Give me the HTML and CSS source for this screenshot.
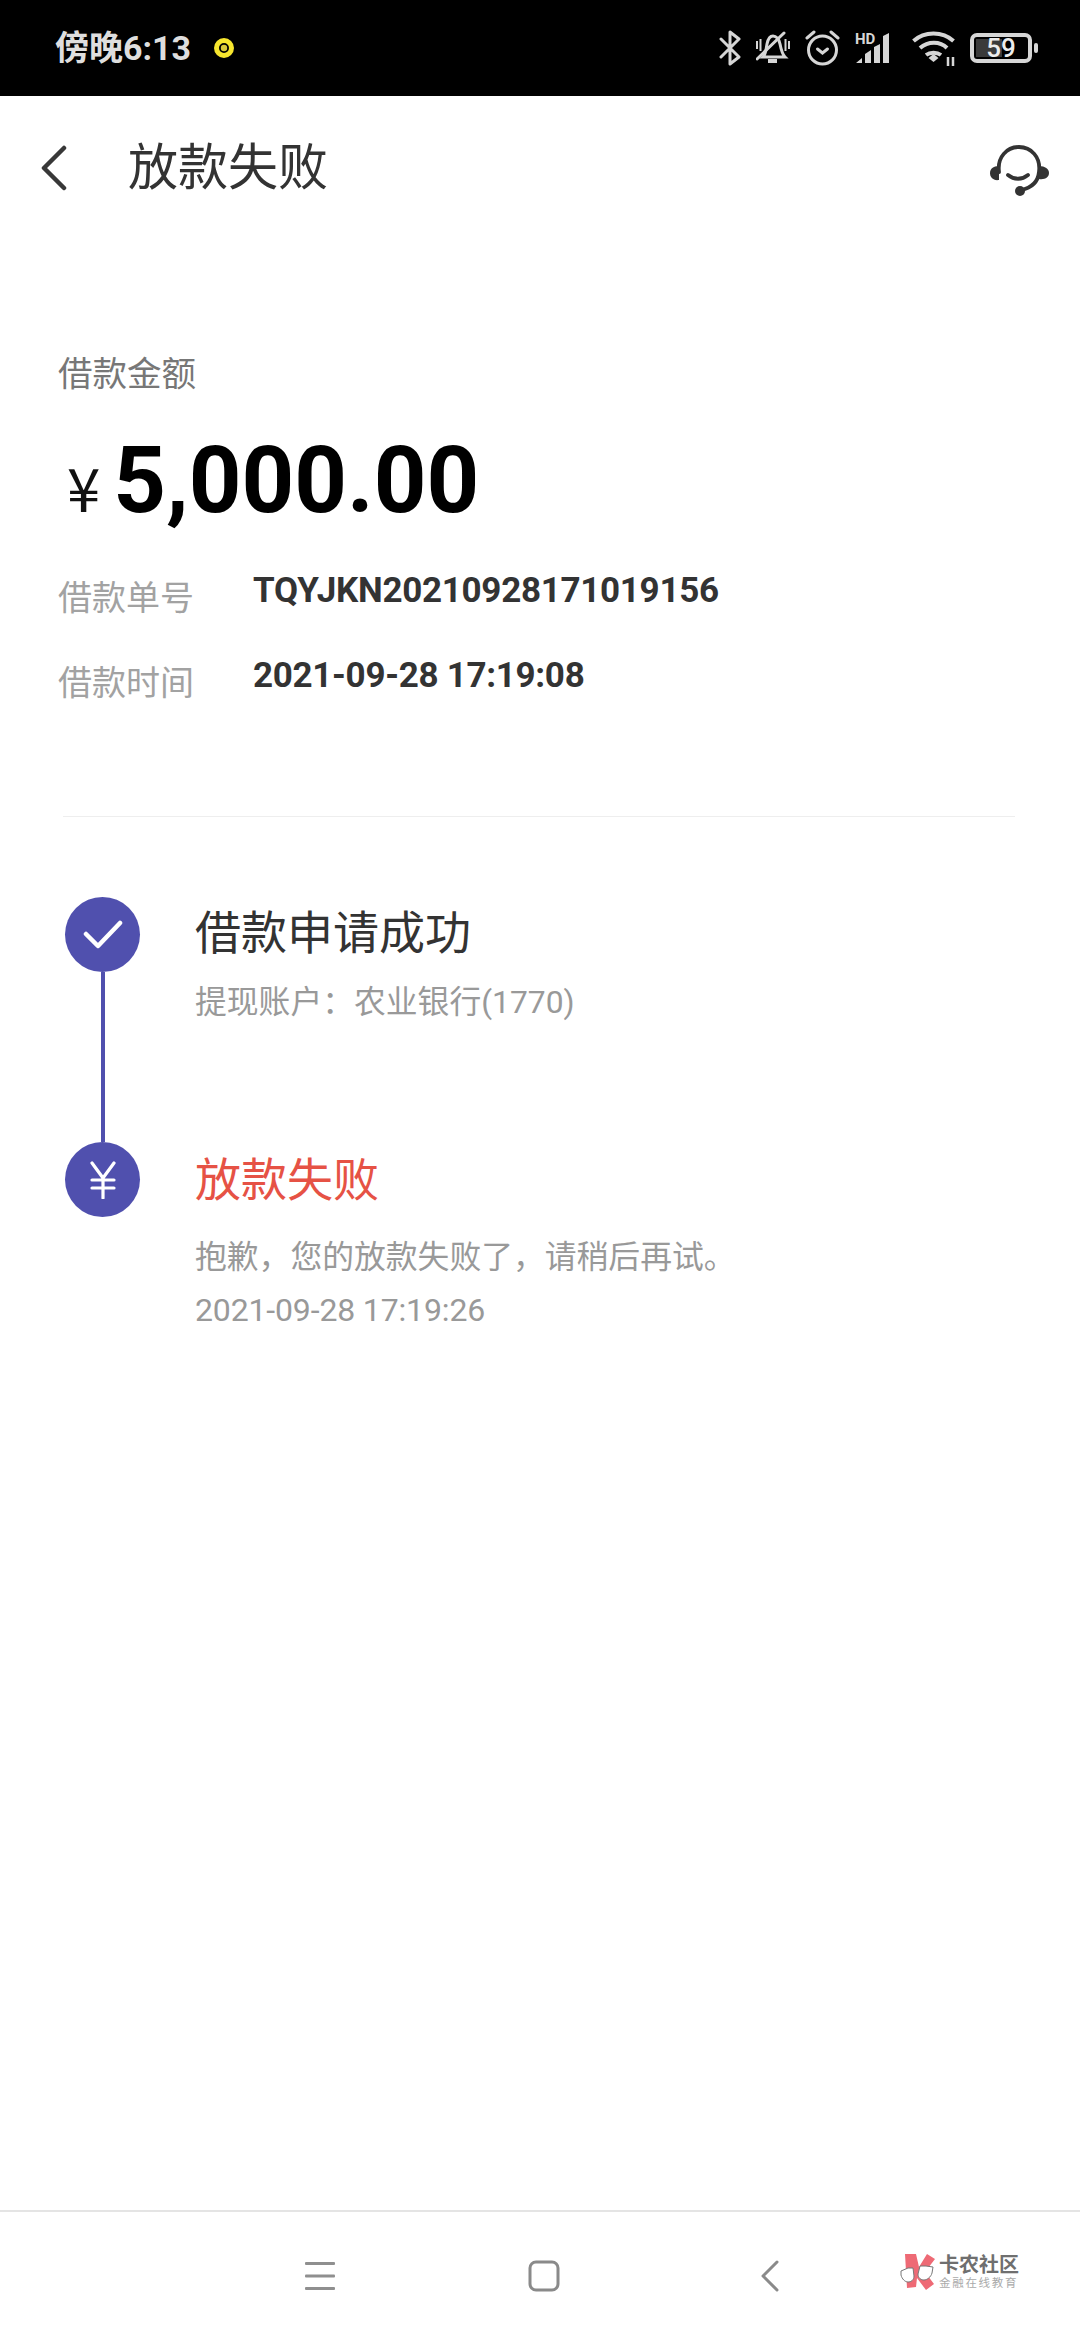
FILE: index.html
```html
<!DOCTYPE html>
<html lang="zh">
<head>
<meta charset="utf-8">
<title>放款失败</title>
<link rel="stylesheet" href="styles.css">
</head>
<body>
<div class="page">
  <header class="status">
    <div class="status-left">
      <span class="clock">傍晚6:13</span>
      <svg class="dot" width="20" height="20" viewBox="0 0 20 20"><circle cx="10" cy="10" r="7.5" fill="none" stroke="#f7e62e" stroke-width="5"/><circle cx="10" cy="10" r="3.2" fill="#d9c93a"/></svg>
    </div>
    <div class="status-right">
      <svg width="22" height="36" viewBox="0 0 22 36" fill="none" stroke="#d6d6d6" stroke-width="3" stroke-linejoin="round" stroke-linecap="round"><path d="M2 9l18 18-9 7V2l9 7L2 27"/></svg>
      <svg width="34" height="34" viewBox="0 0 34 34" fill="none" stroke="#d6d6d6" stroke-width="3"><path d="M7 26c3-3 3-8 4-13 1-5 3-8 6-8s6 3 7 8c1 5 2 10 5 13z"/><path d="M12 30h9" stroke-width="4"/><path d="M1 28L28 2" stroke-linecap="round"/><path d="M1 10v8M4.500 8v12M29.500 8v12M33 10v8" stroke-width="2"/></svg>
      <svg width="35" height="36" viewBox="0 0 35 36" fill="none" stroke="#d6d6d6" stroke-width="3" stroke-linecap="round"><circle cx="17.500" cy="20" r="14"/><path d="M12.500 19l5 4 5-4"/><path d="M2 8l7-6M33 8l-7-6"/></svg>
      <svg width="42" height="36" viewBox="0 -2 42 36" fill="#d6d6d6"><text class="hd" x="0" y="12">HD</text><path d="M1 31l6-5v5zM10 31V22l6-4v13zM19 31V15l6-3v19zM33 31H28V4l6-3v30z"/></svg>
      <svg width="43" height="36" viewBox="0 0 43 36" fill="none" stroke="#d6d6d6" stroke-width="4"><path d="M1.500 11c11-10 29-10 40 0M8 18c8-7 20-7 27 0M14 25c4-3 11-3 15 0"/><path d="M21.500 24l5 4-5 4-5-4z" fill="#d6d6d6" stroke="none"/><path d="M36 27v9M41 27v9" stroke-width="2.500"/></svg>
      <div class="battery">
        <div class="battery-body">
          <span class="battery-fill"></span>
          <span class="battery-num">59</span>
        </div>
        <span class="battery-tip"></span>
      </div>
    </div>
  </header>

  <div class="nav">
    <svg class="back" width="26" height="46" viewBox="0 0 26 46" fill="none" stroke="#383838" stroke-width="4.500" stroke-linecap="round" stroke-linejoin="round"><path d="M23 3L3 23l20 20"/></svg>
    <h1 class="nav-title">放款失败</h1>
    <svg class="headset" width="62" height="52" viewBox="0 0 62 52" fill="none" stroke="#333" stroke-width="3.800" stroke-linecap="round"><path d="M11 27C9 12 19 2 31 2s22 10 20 25c-1 10-8 16-18 18"/><path d="M20 30c6 5 14 5 20 0"/><path d="M11 21c-6 0-9 3-9 7s3 8 9 7z" fill="#333" stroke="none"/><path d="M51 21c6 0 10 3 10 7s-4 7-10 6z" fill="#333" stroke="none"/><circle cx="32" cy="46" r="5" fill="#333" stroke="none"/></svg>
  </div>

  <main class="content">
    <section class="summary">
      <div class="amount-label">借款金额</div>
      <div class="amount"><span class="yen">¥</span><span class="figure">5,000.00</span></div>
      <div class="meta-row"><span class="meta-key">借款单号</span><span class="meta-value">TQYJKN20210928171019156</span></div>
      <div class="meta-row"><span class="meta-key">借款时间</span><span class="meta-value">2021-09-28 17:19:08</span></div>
    </section>

    <hr class="divider">

    <section class="timeline">
      <div class="step step-first">
        <div class="rail">
          <span class="node"><svg width="40" height="32" viewBox="0 0 40 32" fill="none" stroke="#fff" stroke-width="4.500" stroke-linecap="round" stroke-linejoin="round"><path d="M3 15l12 12L37 4"/></svg></span>
          <span class="rail-line"></span>
        </div>
        <div class="step-body">
          <div class="step-title">借款申请成功</div>
          <div class="step-text">提现账户：农业银行(1770)</div>
        </div>
      </div>
      <div class="step">
        <div class="rail">
          <span class="node"><svg width="26" height="38" viewBox="0 0 26 38" fill="none" stroke="#fff" stroke-width="3.200" stroke-linecap="round"><path d="M2 2l11 15L24 2M13 17v20M2 19h22M2 27h22"/></svg></span>
        </div>
        <div class="step-body">
          <div class="step-title step-fail">放款失败</div>
          <div class="step-text step-text-fail">抱歉，您的放款失败了，请稍后再试。</div>
          <div class="step-text step-date">2021-09-28 17:19:26</div>
        </div>
      </div>
    </section>
  </main>

  <footer class="softkeys">
    <svg class="key-menu" width="30" height="28" viewBox="0 0 30 28" fill="#8f8f8f"><rect width="30" height="3" y="0" rx="1"/><rect width="30" height="3" y="12.500" rx="1"/><rect width="30" height="3" y="25" rx="1"/></svg>
    <svg class="key-home" width="32" height="32" viewBox="0 0 32 32" fill="none" stroke="#8a8a8a" stroke-width="3"><rect x="2" y="2" width="28" height="28" rx="6"/></svg>
    <svg class="key-back" width="20" height="32" viewBox="0 0 20 32" fill="none" stroke="#8a8a8a" stroke-width="3" stroke-linecap="round" stroke-linejoin="round"><path d="M17 2L3 16l14 14"/></svg>
    <div class="watermark">
      <svg width="36" height="38" viewBox="0 0 36 38"><path d="M5 1h11l3 13L27 1l8 5-10 13 9 12-8 6-9-12-1 9-9 1z" fill="#ee6a75"/><path d="M1 18l7-3h5l1 8c0 4-3 6-6 6s-6-3-7-7zM33 14l-7-1h-6l-2 8c0 4 3 6 6 6s7-3 8-7z" fill="#fff" stroke="#777" stroke-width="1"/></svg>
      <div class="mark-text">
        <span class="mark-main">卡农社区</span>
        <span class="mark-sub">金融在线教育</span>
      </div>
    </div>
  </footer>
</div>
</body>
</html>
```

FILE: styles.css
```css
* { box-sizing: border-box; }
html, body { margin: 0; padding: 0; background: #fff; }
body { font-family: Roboto, "Noto Sans CJK SC", sans-serif; }
.page { width: 1080px; height: 2340px; display: flex; flex-direction: column; overflow: hidden; }

.status { height: 96px; flex: none; background: #000; display: flex; align-items: center; justify-content: space-between; padding: 0 42px 0 55px; }
.status-left { display: flex; align-items: center; gap: 23px; }
.clock { font-size: 34px; font-weight: 700; color: #dedede; line-height: 40px; }
.dot { display: block; }
.status-right { display: flex; align-items: center; gap: 15px; }
.status-right svg { display: block; }
.hd { font: 700 15px Roboto, sans-serif; }
.battery { display: flex; align-items: center; gap: 2px; }
.battery-body { position: relative; width: 62px; height: 30px; border: 4px solid #d6d6d6; border-radius: 7px; display: flex; align-items: center; justify-content: center; overflow: hidden; }
.battery-fill { position: absolute; left: 2px; top: 2px; bottom: 2px; width: 26px; background: #3a3a3a; }
.battery-num { position: relative; font-size: 26px; font-weight: 500; color: #ececec; line-height: 22px; }
.battery-tip { width: 4px; height: 10px; background: #d6d6d6; border-radius: 2px; }

.nav { height: 144px; flex: none; display: flex; align-items: center; padding: 0 30px 0 41px; }
.back { flex: none; }
.nav-title { margin: 0 0 0 61px; font-size: 50px; font-weight: 400; color: #333; line-height: 60px; flex: 1; }
.headset { flex: none; margin-top: 6px; }

.content { flex: 1; display: flex; flex-direction: column; padding: 0 65px 0 58px; }
.summary { padding-top: 109px; }
.amount-label { font-size: 34.500px; line-height: 50px; color: #777; }
.amount { display: flex; align-items: baseline; margin: 26px 0 32px; padding-left: 9px; height: 112px; }
.yen { font-family: "Noto Sans CJK SC", sans-serif; font-size: 60px; color: #111; margin-right: 13px; }
.figure { font-size: 92px; font-weight: 700; color: #000; line-height: 112px; }
.meta-row { display: flex; height: 85px; }
.meta-key { width: 195px; font-size: 34px; line-height: 50px; color: #a2a2a2; margin-top: 4px; }
.meta-value { font-size: 35px; font-weight: 700; color: #333; line-height: 44px; letter-spacing: -0.3px; }

.divider { margin: 77px 0 0 5px; border: 0; height: 1px; background: #eee; }

.timeline { padding: 80px 0 0 7px; }
.step { display: flex; }
.step-first { height: 245px; }
.rail { width: 75px; flex: none; display: flex; flex-direction: column; align-items: center; }
.node { width: 75px; height: 75px; flex: none; border-radius: 50%; background: #5050ae; display: flex; align-items: center; justify-content: center; }
.rail-line { width: 4px; flex: 1; background: #5050ae; }
.step-body { margin-left: 55px; padding-top: 1px; }
.step-title { font-size: 46px; line-height: 70px; color: #333; }
.step-fail { color: #e65245; margin-top: 2px; }
.step-text { font-size: 31.800px; line-height: 50px; color: #999; margin-top: 9px; }
.step-text-fail { margin-top: 17px; }
.step-date { margin-top: 3px; font-size: 32px; letter-spacing: -0.15px; }

.softkeys { height: 130px; flex: none; border-top: 2px solid #e4e4e4; position: relative; display: flex; align-items: center; padding: 0 0 0 305px; }
.key-home { margin-left: 193px; }
.key-back { margin-left: 200px; }
.watermark { position: absolute; left: 900px; top: 41px; display: flex; align-items: center; gap: 3px; }
.mark-text { display: flex; flex-direction: column; }
.mark-main { font-size: 20px; line-height: 22px; font-weight: 700; color: #6f6f6f; white-space: nowrap; }
.mark-sub { font-size: 11.500px; line-height: 15px; letter-spacing: 1.700px; color: #aaa; white-space: nowrap; }
```
